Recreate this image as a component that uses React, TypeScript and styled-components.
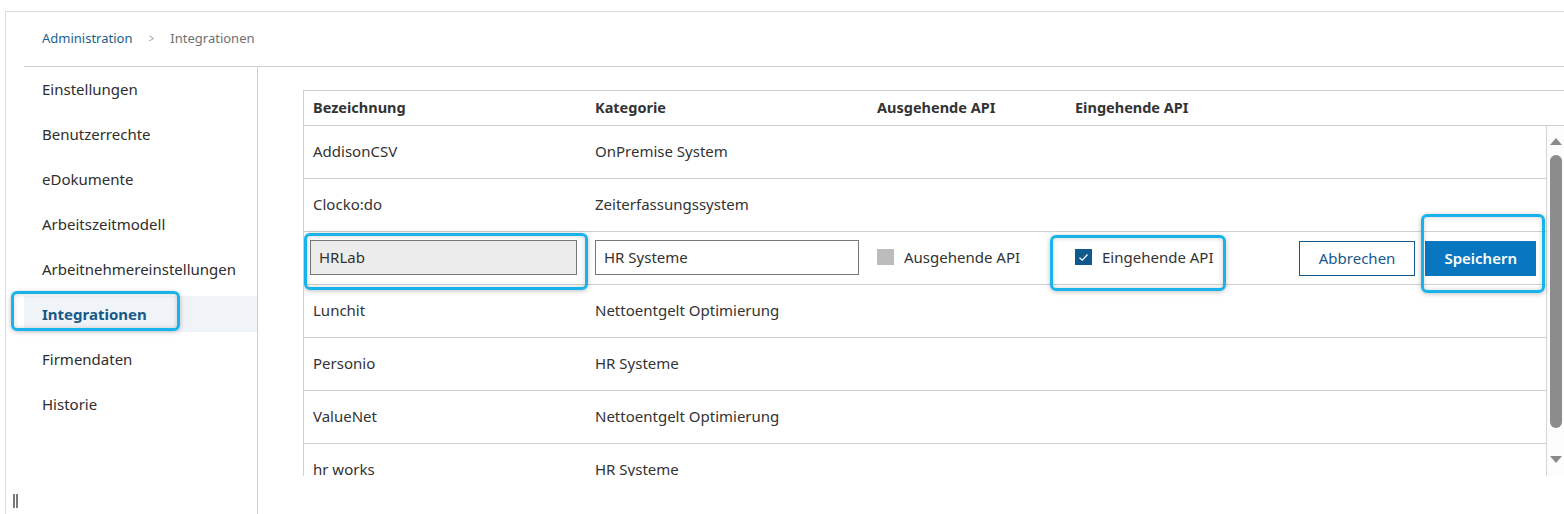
import styled, { createGlobalStyle } from 'styled-components';

const GlobalStyle = createGlobalStyle`
  html, body {
    margin: 0;
    padding: 0;
    background: #fff;
    overflow: hidden;
  }
  body {
    font-family: 'Noto Sans', 'Open Sans', sans-serif;
    color: #2e2e2e;
  }
  * { box-sizing: border-box; }
`;

const menu = [
  'Einstellungen',
  'Benutzerrechte',
  'eDokumente',
  'Arbeitszeitmodell',
  'Arbeitnehmereinstellungen',
  'Integrationen',
  'Firmendaten',
  'Historie',
];

const rows = [
  { name: 'AddisonCSV', category: 'OnPremise System' },
  { name: 'Clocko:do', category: 'Zeiterfassungssystem' },
  { name: 'HRLab', category: 'HR Systeme', editing: true },
  { name: 'Lunchit', category: 'Nettoentgelt Optimierung' },
  { name: 'Personio', category: 'HR Systeme' },
  { name: 'ValueNet', category: 'Nettoentgelt Optimierung' },
  { name: 'hr works', category: 'HR Systeme' },
];

function App() {
  return (
    <>
      <GlobalStyle />
      <Frame>
        <Breadcrumb>
          <Crumb>Administration</Crumb>
          <Chevron>&gt;</Chevron>
          <Crumb $current>Integrationen</Crumb>
        </Breadcrumb>
        <Content>
          <Sidebar>
            {menu.map((item) => (
              <MenuItem key={item} $active={item === 'Integrationen'}>
                {item}
                {item === 'Integrationen' && <SideMark />}
              </MenuItem>
            ))}
          </Sidebar>
          <Main>
            <Table>
              <HeaderRow>
                <HeadCell>Bezeichnung</HeadCell>
                <HeadCell>Kategorie</HeadCell>
                <HeadCell>Ausgehende API</HeadCell>
                <HeadCell>Eingehende API</HeadCell>
              </HeaderRow>
              <Body>
                <Rows>
                  {rows.map((row) =>
                    row.editing ? (
                      <Row key={row.name}>
                        <Cell $tight>
                          <Input value={row.name} readOnly $disabled />
                          <NameMark />
                        </Cell>
                        <Cell>
                          <Input value={row.category} readOnly />
                        </Cell>
                        <Cell>
                          <CheckLabel>
                            <Box />
                            Ausgehende API
                          </CheckLabel>
                        </Cell>
                        <Cell>
                          <CheckLabel>
                            <Box $checked>
                              <svg width="11" height="9" viewBox="0 0 11 9">
                                <path d="M1.5 4.8 L4.2 7.2 L9.5 1.5" fill="none" stroke="#fff" strokeWidth="1.3" />
                              </svg>
                            </Box>
                            Eingehende API
                          </CheckLabel>
                          <InMark />
                        </Cell>
                        <Actions>
                          <Button>Abbrechen</Button>
                          <Button $primary>
                            Speichern
                            <SaveMark />
                          </Button>
                        </Actions>
                      </Row>
                    ) : (
                      <Row key={row.name}>
                        <Cell>{row.name}</Cell>
                        <Cell>{row.category}</Cell>
                        <Cell />
                        <Cell />
                      </Row>
                    )
                  )}
                </Rows>
                <Scrollbar>
                  <Arrow $up />
                  <Thumb />
                  <Arrow />
                </Scrollbar>
              </Body>
            </Table>
          </Main>
        </Content>
        <Handle />
      </Frame>
    </>
  );
}

export default App;

const Frame = styled.div`
  position: relative;
  margin: 11px 0 0 5px;
  height: 503px;
  border-top: 1px solid #dcdcdc;
  border-left: 1px solid #dcdcdc;
  display: flex;
  flex-direction: column;
`;

const Breadcrumb = styled.div`
  height: 54px;
  display: flex;
  align-items: center;
  padding-left: 36px;
  padding-bottom: 2px;
  font-size: 13px;
`;

const Crumb = styled.span<{ $current?: boolean }>`
  color: ${({ $current }) => ($current ? '#707070' : '#1b5f8c')};
`;

const Chevron = styled.span`
  color: #9a9a9a;
  margin: 0 15px 0 16px;
  font-size: 12px;
  transform: scaleX(0.8);
`;

const Content = styled.div`
  flex: 1;
  margin-left: 18px;
  border-top: 1px solid #cfcfcf;
  display: flex;
  min-height: 0;
`;

const Sidebar = styled.nav`
  width: 234px;
  flex-shrink: 0;
  border-right: 1px solid #cfcfcf;
  padding-top: 4px;
  display: flex;
  flex-direction: column;
  gap: 9px;
`;

const MenuItem = styled.div<{ $active?: boolean }>`
  position: relative;
  height: 36px;
  display: flex;
  align-items: center;
  padding-left: 18px;
  font-size: 15px;
  color: ${({ $active }) => ($active ? '#17588a' : '#2e2e2e')};
  font-weight: ${({ $active }) => ($active ? 700 : 400)};
  background: ${({ $active }) => ($active ? '#f0f4f9' : 'transparent')};
`;

const Mark = styled.div`
  position: absolute;
  border: 3px solid #17b3ea;
  border-radius: 6px;
  box-shadow: 0 1px 5px rgba(0, 0, 0, 0.25), inset 0 0 5px rgba(0, 0, 0, 0.18);
  pointer-events: none;
`;

const SideMark = styled(Mark)`
  left: -13px;
  top: -5px;
  width: 169px;
  height: 40px;
`;

const Main = styled.main`
  flex: 1;
  min-width: 0;
  padding: 23px 0 0 45px;
  overflow: hidden;
`;

const Table = styled.div`
  border-top: 1px solid #cfcfcf;
  border-left: 1px solid #cfcfcf;
  width: 1262px;
`;

const columns = '282px 282px 198px 1fr';

const HeaderRow = styled.div`
  display: grid;
  grid-template-columns: ${columns};
  height: 35px;
  border-bottom: 1px solid #cfcfcf;
  align-items: center;
  padding-bottom: 2px;
`;

const HeadCell = styled.div`
  padding-left: 9px;
  font-size: 14.5px;
  font-weight: 700;
  color: #333;
`;

const Body = styled.div`
  display: flex;
  height: 350px;
  overflow: hidden;
`;

const Rows = styled.div`
  flex: 1;
  min-width: 0;
`;

const Row = styled.div`
  position: relative;
  display: grid;
  grid-template-columns: ${columns} auto;
  height: 53px;
  border-bottom: 1px solid #cfcfcf;
  align-items: center;
`;

const Cell = styled.div<{ $tight?: boolean }>`
  position: relative;
  padding-left: ${({ $tight }) => ($tight ? '6px' : '9px')};
  padding-bottom: 2px;
  font-size: 15px;
  color: #333;
  display: flex;
  align-items: center;
  white-space: nowrap;
`;

const Input = styled.input<{ $disabled?: boolean }>`
  width: ${({ $disabled }) => ($disabled ? '267px' : '264px')};
  height: 35px;
  border: 1px solid #777;
  background: ${({ $disabled }) => ($disabled ? '#ececec' : '#fff')};
  font-family: inherit;
  font-size: 15px;
  color: #333;
  padding: 0 8px;
  outline: none;
`;

const NameMark = styled(Mark)`
  left: 0;
  top: -7px;
  width: 284px;
  height: 57px;
`;

const CheckLabel = styled.label`
  display: flex;
  align-items: center;
  gap: 10px;
  font-size: 15px;
  color: #333;
`;

const Box = styled.span<{ $checked?: boolean }>`
  width: 17px;
  height: 16px;
  display: flex;
  align-items: center;
  justify-content: center;
  background: ${({ $checked }) => ($checked ? '#0e5a8e' : '#bcbcbc')};
`;

const InMark = styled(Mark)`
  left: -16px;
  top: -12px;
  width: 176px;
  height: 56px;
`;

const Actions = styled.div`
  display: flex;
  justify-content: flex-end;
  gap: 10px;
  padding-right: 10px;
`;

const Button = styled.button<{ $primary?: boolean }>`
  position: relative;
  height: 35px;
  padding: 0 ${({ $primary }) => ($primary ? '18px' : '19px')};
  font-family: inherit;
  font-size: 15px;
  font-weight: ${({ $primary }) => ($primary ? 600 : 400)};
  color: ${({ $primary }) => ($primary ? '#fff' : '#17588a')};
  background: ${({ $primary }) => ($primary ? '#0877c0' : '#fff')};
  border: 1px solid ${({ $primary }) => ($primary ? '#0877c0' : '#17588a')};
  cursor: pointer;
`;

const SaveMark = styled(Mark)`
  left: -5px;
  top: -28px;
  width: 124px;
  height: 79px;
`;

const Scrollbar = styled.div`
  width: 19px;
  flex-shrink: 0;
  border-left: 1px solid #d6d6d6;
  background: #fcfcfc;
  display: flex;
  flex-direction: column;
  align-items: center;
  padding-top: 12px;
`;

const Arrow = styled.div<{ $up?: boolean }>`
  width: 0;
  height: 0;
  border-left: 6px solid transparent;
  border-right: 6px solid transparent;
  ${({ $up }) =>
    $up ? 'border-bottom: 7px solid #8a8a8a;' : 'border-top: 7px solid #8a8a8a;'}
`;

const Thumb = styled.div`
  width: 12px;
  height: 273px;
  margin: 10px 0 28px;
  border-radius: 6px;
  background: #8c8c8c;
`;

const Handle = styled.div`
  position: absolute;
  left: 7px;
  bottom: 6px;
  width: 5px;
  height: 14px;
  border-left: 2px solid #7a7a7a;
  border-right: 2px solid #7a7a7a;
`;
